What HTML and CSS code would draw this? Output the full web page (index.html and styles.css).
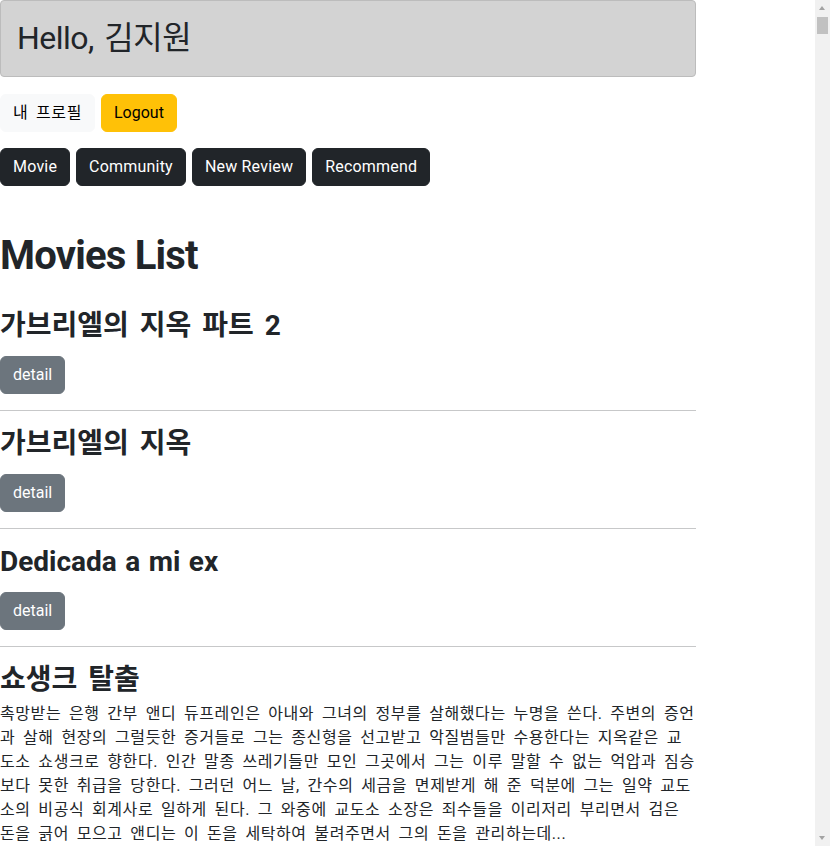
FILE: index.html
```html
<!DOCTYPE html>
<html lang="ko">
<head>
<meta charset="utf-8">
<title>Movies</title>
<link rel="stylesheet" href="styles.css">
</head>
<body>
<div class="page">
  <header class="hello">Hello, 김지원</header>
  <div class="btn-row account">
    <a class="btn btn-light ko-text" href="#">내 프로필</a>
    <button class="btn btn-warning" type="button" lang="en">Logout</button>
  </div>
  <nav class="btn-row nav" lang="en">
    <a class="btn btn-dark" href="#">Movie</a>
    <a class="btn btn-dark" href="#">Community</a>
    <a class="btn btn-dark" href="#">New Review</a>
    <a class="btn btn-dark" href="#">Recommend</a>
  </nav>

  <h1 class="list-title" lang="en">Movies List</h1>

  <section class="movie">
    <h3 class="movie-title">가브리엘의 지옥 파트 2</h3>
    <div class="movie-actions"><a class="btn btn-secondary" href="#" lang="en">detail</a></div>
  </section>
  <hr class="divider">
  <section class="movie">
    <h3 class="movie-title">가브리엘의 지옥</h3>
    <div class="movie-actions"><a class="btn btn-secondary" href="#" lang="en">detail</a></div>
  </section>
  <hr class="divider">
  <section class="movie">
    <h3 class="movie-title" lang="es">Dedicada a mi ex</h3>
    <div class="movie-actions"><a class="btn btn-secondary" href="#" lang="en">detail</a></div>
  </section>
  <hr class="divider">
  <section class="movie">
    <h3 class="movie-title">쇼생크 탈출</h3>
    <p class="overview ko-text">촉망받는 은행 간부 앤디 듀프레인은 아내와 그녀의 정부를 살해했다는 누명을 쓴다. 주변의 증언<br>과 살해 현장의 그럴듯한 증거들로 그는 종신형을 선고받고 악질범들만 수용한다는 지옥같은 교<br>도소 쇼생크로 향한다. 인간 말종 쓰레기들만 모인 그곳에서 그는 이루 말할 수 없는 억압과 짐승<br>보다 못한 취급을 당한다. 그러던 어느 날, 간수의 세금을 면제받게 해 준 덕분에 그는 일약 교도<br>소의 비공식 회계사로 일하게 된다. 그 와중에 교도소 소장은 죄수들을 이리저리 부리면서 검은<br>돈을 긁어 모으고 앤디는 이 돈을 세탁하여 불려주면서 그의 돈을 관리하는데...</p>
    <div class="movie-actions"><a class="btn btn-secondary" href="#" lang="en">detail</a></div>
  </section>
  <hr class="divider">
  <section class="movie">
    <h3 class="movie-title">대부</h3>
    <div class="movie-actions"><a class="btn btn-secondary" href="#" lang="en">detail</a></div>
  </section>
  <hr class="divider">
  <section class="movie">
    <h3 class="movie-title">쉰들러 리스트</h3>
    <div class="movie-actions"><a class="btn btn-secondary" href="#" lang="en">detail</a></div>
  </section>
  <hr class="divider">
</div>

<div class="scrollbar" aria-hidden="true">
  <span class="scroll-arrow up"></span>
  <span class="scroll-thumb"></span>
  <span class="scroll-arrow down"></span>
</div>
</body>
</html>
```

FILE: styles.css
```css
* {
  box-sizing: border-box;
}

html, body {
  margin: 0;
  padding: 0;
}

body {
  font-family: Roboto, "Noto Sans CJK KR", sans-serif;
  font-size: 16px;
  line-height: 1.5;
  color: #212529;
  background: #ffffff;
}

.page {
  width: 696px;
  padding-bottom: 400px;
}

.hello {
  background: #d3d3d3;
  border: 1px solid #bcbcbc;
  border-radius: 4px;
  padding: 16px;
  font-size: 32px;
  line-height: 43px;
  font-weight: 400;
  letter-spacing: -0.5px;
  word-spacing: 3px;
}

.btn-row {
  display: flex;
  gap: 6px;
}

.account {
  margin-top: 17px;
}

.nav {
  margin-top: 16px;
}

.nav .btn {
  letter-spacing: 0.2px;
}

.btn {
  display: inline-block;
  padding: 6px 12px;
  font-size: 16px;
  line-height: 24px;
  border: 1px solid transparent;
  border-radius: 6px;
  text-decoration: none;
  font-family: inherit;
  cursor: pointer;
}

.btn-light {
  background: #f8f9fa;
  border-color: #f8f9fa;
  color: #000;
}

.btn-warning {
  background: #ffc107;
  border-color: #ffc107;
  color: #000;
}

.btn-dark {
  background: #212529;
  border-color: #212529;
  color: #fff;
}

.btn-secondary {
  background: #6c757d;
  border-color: #6c757d;
  color: #fff;
}

.ko-text {
  letter-spacing: 0.58px;
  word-spacing: 3.2px;
}

.list-title {
  font-size: 40px;
  line-height: 48px;
  font-weight: 700;
  letter-spacing: -0.8px;
  margin: 46px 0 29px;
}

.movie-title {
  font-size: 28px;
  line-height: 34px;
  font-weight: 700;
  margin: 0;
  word-spacing: 4px;
}

.movie-title:lang(es) {
  word-spacing: 1.5px;
}

.movie-actions {
  margin-top: 13px;
}

.overview {
  margin: 5px 0 0;
  line-height: 24px;
}

.overview + .movie-actions {
  margin-top: 16px;
}

.divider {
  margin: 16px 0;
  border: 0;
  border-top: 1px solid #212529;
  opacity: 0.25;
}

.scrollbar {
  position: fixed;
  top: 0;
  right: 0;
  bottom: 0;
  width: 15px;
  background: #f1f1f1;
}

.scroll-thumb {
  position: absolute;
  top: 17px;
  left: 2px;
  width: 11px;
  height: 17px;
  background: #c1c1c1;
}

.scroll-arrow {
  position: absolute;
  left: 4px;
  width: 0;
  height: 0;
  border-left: 3.5px solid transparent;
  border-right: 3.5px solid transparent;
}

.scroll-arrow.up {
  top: 6px;
  border-bottom: 4px solid #a3a3a3;
}

.scroll-arrow.down {
  bottom: 6px;
  border-top: 4px solid #a3a3a3;
}
```
